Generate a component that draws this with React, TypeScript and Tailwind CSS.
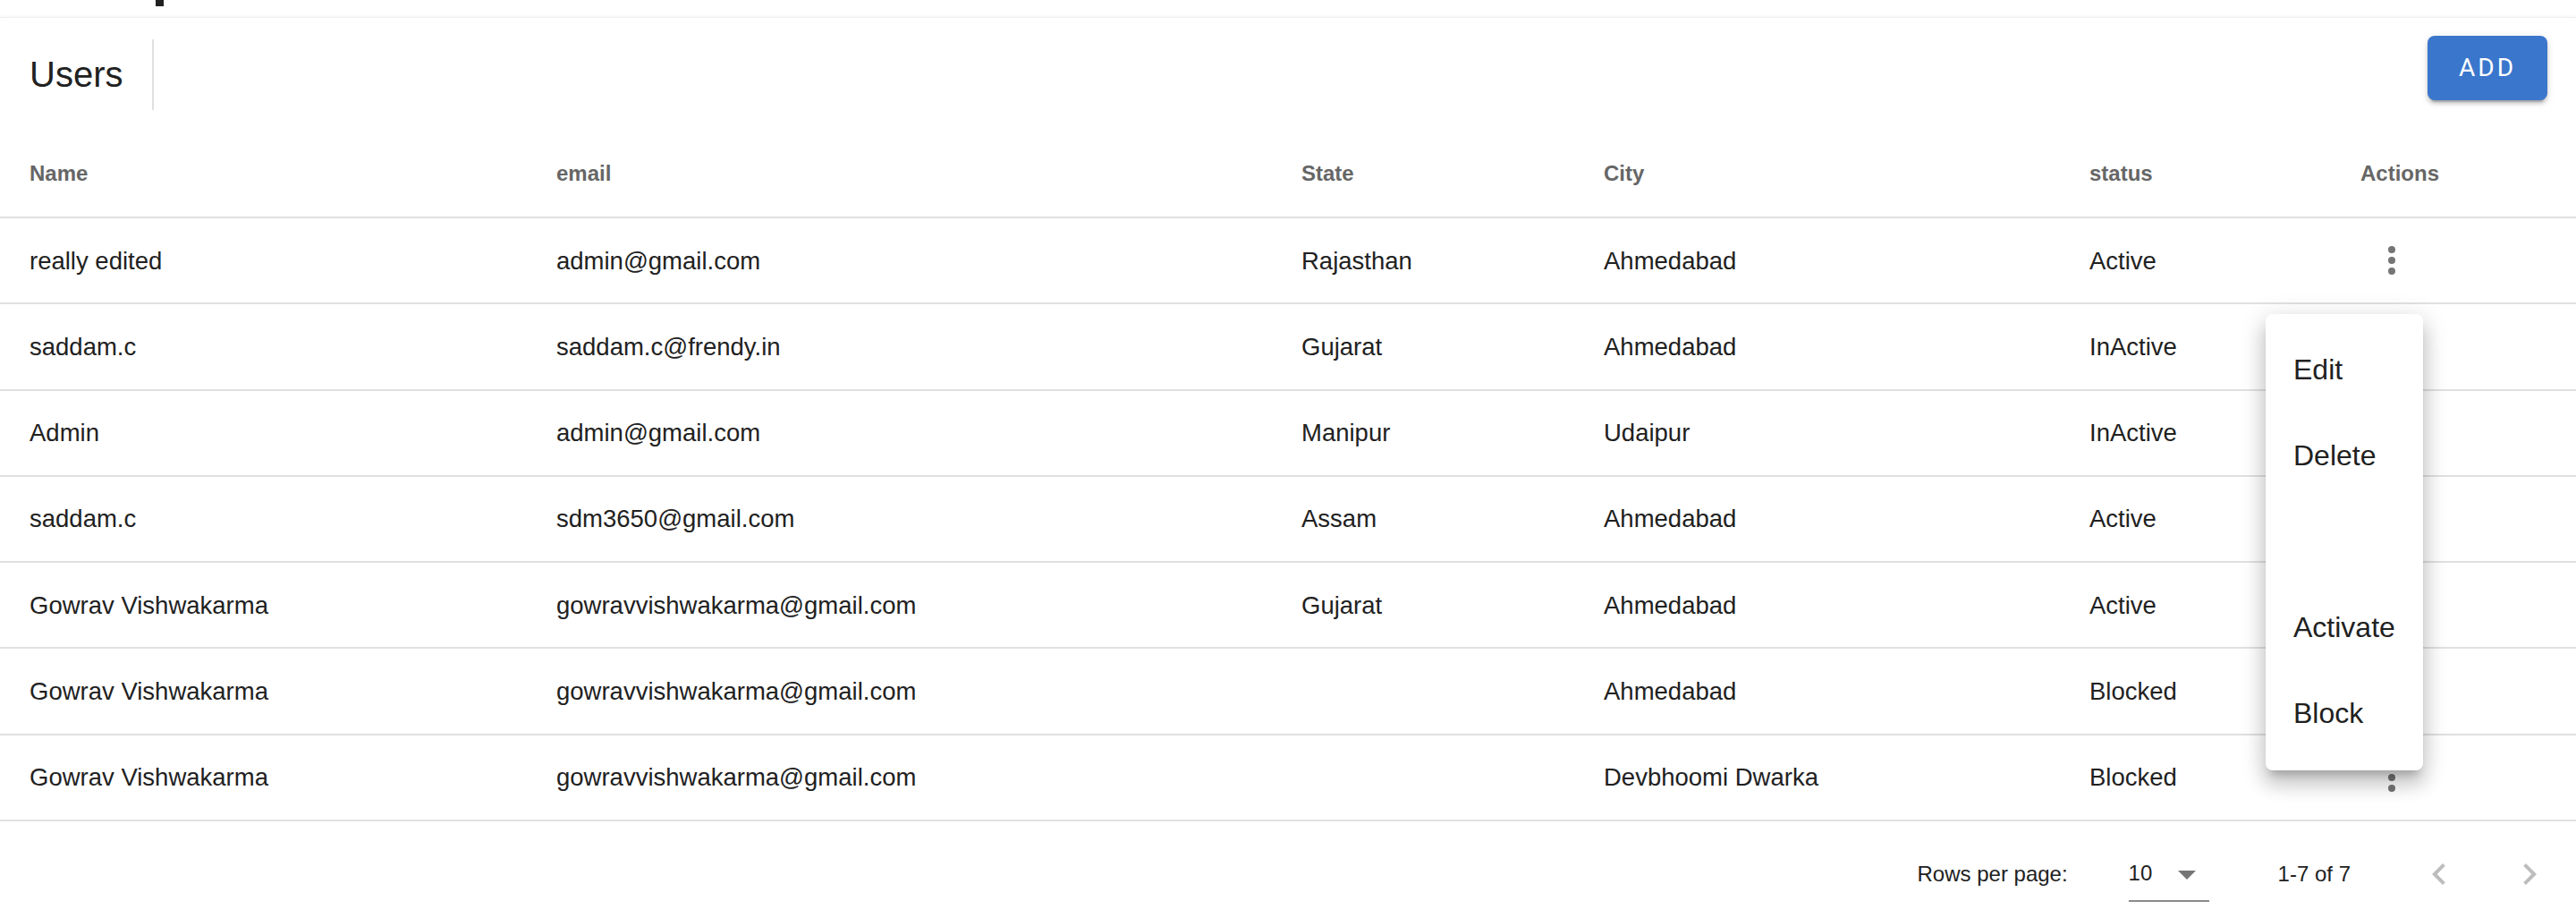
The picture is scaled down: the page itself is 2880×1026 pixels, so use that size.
import React from "react";

const rows = [
  { name: "really edited", email: "admin@gmail.com", state: "Rajasthan", city: "Ahmedabad", status: "Active" },
  { name: "saddam.c", email: "saddam.c@frendy.in", state: "Gujarat", city: "Ahmedabad", status: "InActive" },
  { name: "Admin", email: "admin@gmail.com", state: "Manipur", city: "Udaipur", status: "InActive" },
  { name: "saddam.c", email: "sdm3650@gmail.com", state: "Assam", city: "Ahmedabad", status: "Active" },
  { name: "Gowrav Vishwakarma", email: "gowravvishwakarma@gmail.com", state: "Gujarat", city: "Ahmedabad", status: "Active" },
  { name: "Gowrav Vishwakarma", email: "gowravvishwakarma@gmail.com", state: "", city: "Ahmedabad", status: "Blocked" },
  { name: "Gowrav Vishwakarma", email: "gowravvishwakarma@gmail.com", state: "", city: "Devbhoomi Dwarka", status: "Blocked" },
];

const grid = "grid grid-cols-[589px_833px_338px_543px_303px_1fr] pl-[33px] items-center";

function MoreVert() {
  return (
    <svg width="48" height="48" viewBox="0 0 24 24" fill="#757575">
      <circle cx="12" cy="6" r="2" />
      <circle cx="12" cy="12" r="2" />
      <circle cx="12" cy="18" r="2" />
    </svg>
  );
}

export default function App() {
  return (
    <div className="relative w-[2880px] h-[1026px] overflow-hidden bg-white text-[#212121]" style={{ fontFamily: '"Liberation Sans", Arial, sans-serif' }}>
      <div className="h-[19px] bg-white">
        <span className="block ml-[174px] w-[9px] h-[7px] bg-[#212121]" />
      </div>
      <div className="border-t border-[#f0f0f0] shadow-[0_-1px_3px_rgba(0,0,0,0.04)]">
        {/* toolbar */}
        <div className="h-[125px] flex items-start pl-[33px] pr-[32px]">
          <div className="h-full flex items-center">
            <span className="text-[40px] leading-none text-[#212121]">Users</span>
            <div className="ml-[33px] w-[2px] h-[79px] bg-[#e0e0e0] mt-[2px]" />
          </div>
          <div className="flex-1" />
          <button
            className="mt-[20px] w-[134px] h-[72px] rounded-[8px] bg-[#3a76cc] text-white text-[28px] tracking-[3px] shadow-[0_6px_2px_-4px_rgba(0,0,0,0.2),0_4px_4px_0_rgba(0,0,0,0.14),0_2px_10px_0_rgba(0,0,0,0.12)]"
            style={{ fontFamily: "Roboto, sans-serif" }}
          >
            ADD
          </button>
        </div>
        {/* header */}
        <div className={`${grid} h-[99px] border-b-2 border-[#e0e0e0] text-[24px] font-bold text-[#666666]`}>
          <div>Name</div>
          <div>email</div>
          <div>State</div>
          <div>City</div>
          <div>status</div>
          <div>Actions</div>
        </div>
        {rows.map((r, i) => (
          <div key={i} className={`${grid} h-[96.3px] border-b-2 border-[#e0e0e0] text-[27.5px]`}>
            <div>{r.name}</div>
            <div>{r.email}</div>
            <div>{r.state}</div>
            <div>{r.city}</div>
            <div>{r.status}</div>
            <div className="flex items-center">
              <span className="ml-[11px] flex">
                <MoreVert />
              </span>
            </div>
          </div>
        ))}
        {/* pagination */}
        <div className="h-[118px] flex items-center justify-end pr-[4px] text-[24px] text-[#212121]">
          <span>Rows per page:</span>
          <div className="ml-[68px] w-[90px] h-[62px] flex items-center border-b-2 border-[#8a8a8a] relative">
            <span>10</span>
            <svg className="absolute left-[41px] top-[7px]" width="48" height="48" viewBox="0 0 24 24" fill="#757575">
              <path d="M7 10l5 5 5-5z" />
            </svg>
          </div>
          <span className="ml-[77px]">1-7 of 7</span>
          <div className="ml-[51px] flex gap-[5px]">
            <span className="w-[96px] h-[96px] flex items-center justify-center">
              <svg width="48" height="48" viewBox="0 0 24 24" fill="#bdbdbd">
                <path d="M15.41 16.59L10.83 12l4.58-4.59L14 6l-6 6 6 6 1.41-1.41z" />
              </svg>
            </span>
            <span className="w-[96px] h-[96px] flex items-center justify-center">
              <svg width="48" height="48" viewBox="0 0 24 24" fill="#bdbdbd">
                <path d="M8.59 16.59L13.17 12 8.59 7.41 10 6l6 6-6 6-1.41-1.41z" />
              </svg>
            </span>
          </div>
        </div>
      </div>

      {/* open menu */}
      <div className="absolute left-[2533px] top-[351px] w-[176px] h-[510px] bg-white rounded-[8px] py-[14px] shadow-[0_10px_10px_-6px_rgba(0,0,0,0.2),0_16px_20px_2px_rgba(0,0,0,0.14),0_6px_28px_4px_rgba(0,0,0,0.12)] text-[32px] text-[#212121]">
        {["Edit", "Delete", "", "Activate", "Block"].map((t, i) => (
          <div key={i} className="h-[96px] flex items-center pl-[31px]">
            {t}
          </div>
        ))}
      </div>
    </div>
  );
}
